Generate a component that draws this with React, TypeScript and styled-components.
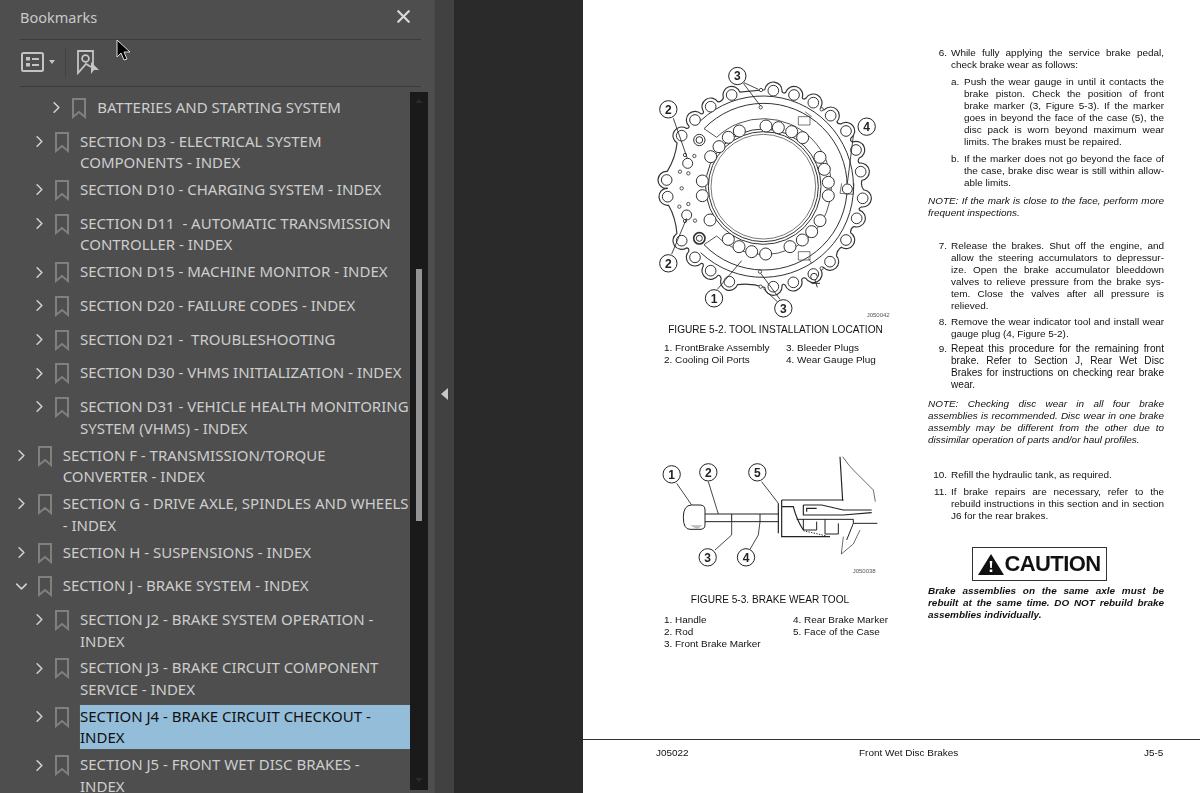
import React from 'react'
import styled, { createGlobalStyle } from 'styled-components'
import { ChevronDown, ChevronRight, X } from 'lucide-react'

type Bookmark = {
    depth: number
    text: string
    open?: boolean
    selected?: boolean
}

const bookmarks: Bookmark[] = [
    { depth: 3, text: 'BATTERIES AND STARTING SYSTEM' },
    { depth: 2, text: 'SECTION D3 - ELECTRICAL SYSTEM COMPONENTS - INDEX' },
    { depth: 2, text: 'SECTION D10 - CHARGING SYSTEM - INDEX' },
    { depth: 2, text: 'SECTION D11  - AUTOMATIC TRANSMISSION CONTROLLER - INDEX' },
    { depth: 2, text: 'SECTION D15 - MACHINE MONITOR - INDEX' },
    { depth: 2, text: 'SECTION D20 - FAILURE CODES - INDEX' },
    { depth: 2, text: 'SECTION D21 -  TROUBLESHOOTING' },
    { depth: 2, text: 'SECTION D30 - VHMS INITIALIZATION - INDEX' },
    { depth: 2, text: 'SECTION D31 - VEHICLE HEALTH MONITORING SYSTEM (VHMS) - INDEX' },
    { depth: 1, text: 'SECTION F - TRANSMISSION/TORQUE CONVERTER - INDEX' },
    { depth: 1, text: 'SECTION G - DRIVE AXLE, SPINDLES AND WHEELS - INDEX' },
    { depth: 1, text: 'SECTION H - SUSPENSIONS - INDEX' },
    { depth: 1, text: 'SECTION J - BRAKE SYSTEM - INDEX', open: true },
    { depth: 2, text: 'SECTION J2 - BRAKE SYSTEM OPERATION - INDEX' },
    { depth: 2, text: 'SECTION J3 - BRAKE CIRCUIT COMPONENT SERVICE - INDEX' },
    { depth: 2, text: 'SECTION J4 - BRAKE CIRCUIT CHECKOUT - INDEX', selected: true },
    { depth: 2, text: 'SECTION J5 - FRONT WET DISC BRAKES -\nINDEX' },
]

const outerBolts = [
    [400, 122], [462, 135], [520, 158], [572, 197], [618, 243], [648, 300], [662, 365], [668, 445],
    [650, 505], [618, 570], [570, 635], [520, 672], [460, 697], [400, 710], [268, 695], [212, 662],
    [165, 622], [125, 572], [83, 440], [80, 390], [125, 257], [165, 210], [212, 170], [275, 135],
]

const innerBolts = [
    [378, 228], [415, 233], [455, 245], [488, 263], [540, 322], [553, 358], [565, 397], [565, 437],
    [540, 512], [515, 545], [487, 570], [450, 590], [377, 612], [335, 605], [297, 590], [265, 568],
    [298, 243], [265, 262], [237, 290], [212, 320], [187, 393], [187, 437], [210, 510],
]

const smallHoles = [
    [363, 120], [362, 172], [360, 665], [362, 710], [545, 178], [545, 655], [125, 415], [120, 365],
    [145, 370], [163, 318], [135, 315], [118, 470], [145, 462], [165, 512], [135, 513],
]

// scalloped edge of the disc: an arc round each bolt, a shallow curve to the next one
const scallopPath = () => {
    const cx = 370
    const cy = 410
    const lobe = 26
    const parts: string[] = []
    outerBolts.forEach(([x, y], i) => {
        const a = Math.atan2(y - cy, x - cx)
        const tx = -Math.sin(a)
        const ty = Math.cos(a)
        const sx = x - tx * lobe
        const sy = y - ty * lobe
        const ex = x + tx * lobe
        const ey = y + ty * lobe
        if (i === 0) {
            parts.push(`M${sx} ${sy}`)
        } else {
            const [px, py] = outerBolts[i - 1]
            const pa = Math.atan2(py - cy, px - cx)
            const mx = (px + x) / 2 - Math.cos(pa) * 4
            const my = (py + y) / 2 - Math.sin(pa) * 4
            parts.push(`Q${mx} ${my} ${sx} ${sy}`)
        }
        parts.push(`A${lobe} ${lobe} 0 0 1 ${ex} ${ey}`)
    })
    return parts.join(' ') + ' Z'
}

const Callout = ({ x, y, n }: { x: number; y: number; n: number }) => (
    <g>
        <circle cx={x} cy={y} r={26} fill="#fff" stroke="#222" strokeWidth={3} />
        <text x={x} y={y + 13} textAnchor="middle" fontSize={36} fontWeight={700} fontFamily="Liberation Sans, sans-serif" fill="#222">{n}</text>
    </g>
)

const DiscFigure = () => (
    <FigureSvg viewBox="0 0 780 810" $height={270}>
        <g fill="#fff" stroke="#333" strokeWidth={3}>
            <path d={scallopPath()} strokeWidth={3.5} />
            <path fill="none" d="M182 212 A272 272 0 1 1 182 608" />
            <path fill="none" d="M192 236 A250 250 0 1 1 192 584" />
            <path fill="none" d="M192 236 L230 262 A204 204 0 1 1 230 558 L192 584" strokeWidth={2.5} />
            {outerBolts.map(([x, y]) => <circle key={`${x}-${y}`} cx={x} cy={y} r={16} />)}
            <circle cx={370} cy={410} r={173} fill="none" />
            <circle cx={370} cy={410} r={165} fill="none" />
            <circle cx={370} cy={410} r={157} fill="none" strokeWidth={2} />
            {innerBolts.map(([x, y]) => <circle key={`${x}-${y}`} cx={x} cy={y} r={18} />)}
            <circle cx={178} cy={270} r={17} />
            <circle cx={178} cy={270} r={10} />
            <circle cx={178} cy={565} r={17} strokeWidth={5} />
            <circle cx={178} cy={565} r={9} />
            <circle cx={143} cy={340} r={15} />
            <circle cx={140} cy={495} r={15} />
            {smallHoles.map(([x, y]) => <circle key={`${x}-${y}`} cx={x} cy={y} r={5} strokeWidth={2.5} />)}
            <circle cx={622} cy={417} r={15} />
            <path fill="none" d="M605 400 L600 430 L640 433 L642 400 M475 200 H510 V225 H475 Z M495 185 L515 200 M475 605 H510 V630 H475 Z M505 625 L515 640" strokeWidth={2} />
            <circle cx={522} cy={680} r={10} />
            <path d="M525 690 L532 712 M515 700 L540 700" fill="none" />
        </g>
        <g fill="none" stroke="#222" strokeWidth={2.5}>
            <path d="M310 100 L362 168 M312 98 L355 118 M100 205 L142 325 M640 258 L622 400 M95 612 L140 505 M232 718 L305 632 M420 748 L362 670 M412 755 L370 716" />
        </g>
        <Callout x={292} y={78} n={3} />
        <Callout x={85} y={178} n={2} />
        <Callout x={680} y={230} n={4} />
        <Callout x={85} y={640} n={2} />
        <Callout x={222} y={745} n={1} />
        <Callout x={430} y={775} n={3} />
        <text x={680} y={802} fontSize={18} fontFamily="Liberation Sans, sans-serif" fill="#555">J050042</text>
    </FigureSvg>
)

const ToolFigure = () => (
    <FigureSvg viewBox="0 0 780 420" $height={140} $top={74}>
        <g fill="none" stroke="#222" strokeWidth={3}>
            <path d="M155 195 H180 Q195 195 195 210 V255 Q195 268 180 268 H150 Q130 268 130 232 Q130 195 155 195 Z" fill="#fff" />
            <path d="M150 256 L187 256 L172 268 Z" fill="#bbb" stroke="none" />
            <path d="M195 222 H415 M195 245 H415 M275 222 V245 M360 222 V245" />
            <path d="M415 190 V280 M425 180 H610 M425 180 V290 H570 M425 200 H460 Q470 240 490 270" strokeWidth={3.5} />
            <path d="M600 50 L608 182 M490 195 H545 L610 210 H695 M490 195 V225 H610 L695 218 M500 215 V205 H530" strokeWidth={3.5} />
            <path d="M470 238 H640 V250 H712 M490 238 V270 H530 V245 M555 238 V282 H595 V250 M640 250 L620 300" />
            <path d="M490 272 L560 288" strokeDasharray="4 4" />
            <path d="M608 50 Q625 75 640 90 T700 150 L706 185 M610 290 L604 342 L640 312 L660 270" strokeWidth={2} />
            <path d="M110 130 L155 195 M205 125 L235 222 M365 125 L415 190 M275 245 V285 L225 330 M360 245 L355 285 L330 328" strokeWidth={2.5} />
        </g>
        <Callout x={95} y={103} n={1} />
        <Callout x={205} y={97} n={2} />
        <Callout x={352} y={97} n={5} />
        <Callout x={203} y={352} n={3} />
        <Callout x={318} y={352} n={4} />
        <text x={638} y={400} fontSize={18} fontFamily="Liberation Sans, sans-serif" fill="#555">J050038</text>
    </FigureSvg>
)

const App: React.FC = () => {
    return (
        <Screen>
            <GlobalStyle />
            <Sidebar>
                <PanelHeader>
                    <PanelTitle>Bookmarks</PanelTitle>
                    <CloseIcon size={21} strokeWidth={2.6} />
                </PanelHeader>
                <Toolbar>
                    <svg width="23" height="20" viewBox="0 0 23 20" fill="none" stroke="#c4c4c4" strokeWidth="2">
                        <rect x="1" y="1" width="21" height="18" rx="1.5" />
                        <rect x="5" y="5" width="4" height="3.5" fill="#c4c4c4" stroke="none" />
                        <rect x="5" y="11" width="4" height="3.5" fill="#c4c4c4" stroke="none" />
                        <path d="M11 7 H18 M11 13 H18" />
                    </svg>
                    <Caret />
                    <ToolSeparator />
                    <svg width="23" height="25" viewBox="0 0 23 25" fill="none" stroke="#c4c4c4" strokeWidth="1.8">
                        <path d="M1 1 H16 V18 L9 14 L1 23 Z" />
                        <circle cx="8.5" cy="8.5" r="3.4" />
                        <path d="M14 12 L22 20 H17 L14 24 Z" fill="#c4c4c4" stroke="none" />
                    </svg>
                </Toolbar>
                <ListArea>
                    <List>
                        {bookmarks.map((b) => (
                            <Row key={b.text} $depth={b.depth}>
                                <Twisty>
                                    {b.open ? <ChevronDown size={19} strokeWidth={2} /> : <ChevronRight size={19} strokeWidth={2} />}
                                </Twisty>
                                <Ribbon width="14" height="21" viewBox="0 0 14 21" fill="none" stroke="#808080" strokeWidth="2">
                                    <path d="M1 1 H13 V19 L7 14 L1 19 Z" />
                                </Ribbon>
                                <Label $selected={b.selected}>{b.text}</Label>
                            </Row>
                        ))}
                    </List>
                    <ScrollTrack>
                        <ScrollArrow $down={false} />
                        <ScrollThumb />
                        <ScrollArrow $down />
                    </ScrollTrack>
                </ListArea>
            </Sidebar>
            <Splitter>
                <SplitArrow />
            </Splitter>
            <Gutter />
            <Sheet>
                <Columns>
                    <FigureColumn>
                        <DiscFigure />
                        <Caption $top={4} $bottom={6} $shift={11}>FIGURE 5-2. TOOL INSTALLATION LOCATION</Caption>
                        <Legend $second={122}>
                            <span>1. FrontBrake Assembly</span>
                            <span>3. Bleeder Plugs</span>
                            <span>2. Cooling Oil Ports</span>
                            <span>4. Wear Gauge Plug</span>
                        </Legend>
                        <ToolFigure />
                        <Caption $top={14} $bottom={8}>FIGURE 5-3. BRAKE WEAR TOOL</Caption>
                        <Legend $second={129}>
                            <span>1. Handle</span>
                            <span>4. Rear Brake Marker</span>
                            <span>2. Rod</span>
                            <span>5. Face of the Case</span>
                            <span>3. Front Brake Marker</span>
                        </Legend>
                    </FigureColumn>
                    <TextColumn>
                        <Step n="6.">While fully applying the service brake pedal, check brake wear as follows:</Step>
                        <SubStep n="a.">Push the wear gauge in until it contacts the brake piston. Check the position of front brake marker (3, Figure 5-3). If the marker goes in beyond the face of the case (5), the disc pack is worn beyond maximum wear limits. The brakes must be repaired.</SubStep>
                        <SubStep n="b.">If the marker does not go beyond the face of the case, brake disc wear is still within allow-able limits.</SubStep>
                        <Note $top={6}>NOTE: If the mark is close to the face, perform more frequent inspections.</Note>
                        <Step n="7." top={21}>Release the brakes. Shut off the engine, and allow the steering accumulators to depressur-ize. Open the brake accumulator bleeddown valves to relieve pressure from the brake sys-tem. Close the valves after all pressure is relieved.</Step>
                        <Step n="8.">Remove the wear indicator tool and install wear gauge plug (4, Figure 5-2).</Step>
                        <Step n="9." top={3} wide>Repeat this procedure for the remaining front brake. Refer to Section J, Rear Wet Disc Brakes for instructions on checking rear brake wear.</Step>
                        <Note $top={7}>NOTE: Checking disc wear in all four brake assemblies is recommended. Disc wear in one brake assembly may be different from the other due to dissimilar operation of parts and/or haul profiles.</Note>
                        <Step n="10." top={23}>Refill the hydraulic tank, as required.</Step>
                        <Step n="11." top={5}>If brake repairs are necessary, refer to the rebuild instructions in this section and in section J6 for the rear brakes.</Step>
                        <CautionBox>
                            <svg width="26" height="21" viewBox="0 0 26 21">
                                <path d="M13 0 L26 21 H0 Z" fill="#111" />
                                <path d="M11.7 7 H14.3 L13.8 14 H12.2 Z M11.7 15.5 H14.3 V18 H11.7 Z" fill="#fff" />
                            </svg>
                            CAUTION
                        </CautionBox>
                        <Warning>Brake assemblies on the same axle must be rebuilt at the same time. DO NOT rebuild brake assemblies individually.</Warning>
                    </TextColumn>
                </Columns>
                <SheetFooter>
                    <span>J05022</span>
                    <span>Front Wet Disc Brakes</span>
                    <span>J5-5</span>
                </SheetFooter>
            </Sheet>
            <Pointer width="18" height="24" viewBox="0 0 18 24">
                <path d="M1 1 V18 L5 14 L8 21 L11 20 L8 13 H14 Z" fill="#000" stroke="#ddd" strokeWidth="1" />
            </Pointer>
        </Screen>
    )
}

const Step = ({ n, top = 4, wide, children }: { n: string; top?: number; wide?: boolean; children: React.ReactNode }) => (
    <StepRow $top={top}>
        <StepNumber>{n}</StepNumber>
        <Para $wide={wide}>{children}</Para>
    </StepRow>
)

const SubStep = ({ n, children }: { n: string; children: React.ReactNode }) => (
    <SubRow>
        <span>{n}</span>
        <Para>{children}</Para>
    </SubRow>
)

const GlobalStyle = createGlobalStyle`
    html, body {
        margin: 0;
        padding: 0;
        height: 100%;
        overflow: hidden;
    }

    #root {
        height: 100%;
    }
`

const Screen = styled.div`
    display: flex;
    position: relative;
    width: 1200px;
    height: 793px;
    overflow: hidden;
    background-color: #2a2a2a;
`

const Sidebar = styled.aside`
    width: 434px;
    flex: none;
    display: flex;
    flex-direction: column;
    box-sizing: border-box;
    border-left: 1px solid #4f4f4f;
    background-color: #4e4e4e;
    color: #cfcfcf;
    font-family: "Noto Sans", sans-serif;
`

const PanelHeader = styled.header`
    height: 40px;
    margin: 0 13px 0 19px;
    display: flex;
    align-items: center;
    justify-content: space-between;
    box-sizing: border-box;
    padding: 0 7px 6px 0;
    border-bottom: 1px solid #3b3b3b;
`

const PanelTitle = styled.h2`
    margin: 0;
    font-size: 14.5px;
    font-weight: 400;
    color: #c9c9c9;
`

const CloseIcon = styled(X)`
    color: #d8d8d8;
`

const Toolbar = styled.div`
    height: 47px;
    margin: 0 13px 0 19px;
    display: flex;
    align-items: center;
    box-sizing: border-box;
    padding: 0 0 2px 1px;
    border-bottom: 1px solid #3b3b3b;
`

const Caret = styled.span`
    width: 0;
    height: 0;
    margin-left: 5px;
    border-left: 3.5px solid transparent;
    border-right: 3.5px solid transparent;
    border-top: 4px solid #c4c4c4;
`

const ToolSeparator = styled.span`
    width: 1px;
    height: 29px;
    margin: 0 11px 0 10px;
    background-color: #424242;
`

const ListArea = styled.div`
    flex: 1;
    min-height: 0;
    display: flex;
    padding-right: 6px;
    overflow: hidden;
`

const List = styled.ul`
    flex: 1;
    min-width: 0;
    margin: 0;
    padding: 7px 0 0;
    list-style: none;
`

const Row = styled.li<{ $depth: number }>`
    display: grid;
    grid-template-columns: 21px 29.4px 1fr;
    box-sizing: border-box;
    min-height: 33.7px;
    padding: 3px 0 2.3px ${(p) => p.$depth * 17.3 - 6}px;
    align-items: start;
`

const Twisty = styled.span`
    display: flex;
    align-items: center;
    height: 21.6px;
    color: #cfcfcf;
`

const Ribbon = styled.svg`
    margin: 1px 0 0 4.4px;
`

const Label = styled.span<{ $selected?: boolean }>`
    font-size: 15px;
    line-height: 21.6px;
    color: ${(p) => (p.$selected ? '#101010' : '#cdcdcd')};
    background-color: ${(p) => (p.$selected ? '#94bdd9' : 'transparent')};
    outline: ${(p) => (p.$selected ? '1px dotted #555' : 'none')};
    margin-top: ${(p) => (p.$selected ? '-1px' : '0')};
    padding-top: ${(p) => (p.$selected ? '1px' : '0')};
    white-space: pre-wrap;
`

const ScrollTrack = styled.div`
    width: 18px;
    flex: none;
    box-sizing: border-box;
    height: 698px;
    margin-top: 5px;
    display: flex;
    flex-direction: column;
    align-items: center;
    background-color: #1a1a1a;
    padding-top: 177px;
    position: relative;
`

const ScrollThumb = styled.div`
    width: 6px;
    height: 252px;
    background-color: #949494;
`

const ScrollArrow = styled.span<{ $down: boolean }>`
    position: absolute;
    left: 5px;
    ${(p) => (p.$down ? 'bottom: 8px;' : 'top: 7px;')}
    width: 0;
    height: 0;
    border-left: 4px solid transparent;
    border-right: 4px solid transparent;
    ${(p) => (p.$down ? 'border-top: 4px solid #2a2a2a;' : 'border-bottom: 4px solid #2a2a2a;')}
`

const Splitter = styled.div`
    width: 20px;
    flex: none;
    display: flex;
    align-items: center;
    justify-content: center;
    box-sizing: border-box;
    padding-bottom: 6px;
    border-left: 1px solid #4a4a4a;
    background-color: #414141;
`

const SplitArrow = styled.span`
    width: 0;
    height: 0;
    border-top: 6px solid transparent;
    border-bottom: 6px solid transparent;
    border-right: 7px solid #c8c8c8;
`

const Gutter = styled.div`
    width: 129px;
    flex: none;
    background-color: #2a2a2a;
`

const Sheet = styled.main`
    flex: 1;
    display: flex;
    flex-direction: column;
    background-color: #fff;
    color: #111;
    font-family: "Liberation Sans", Arial, sans-serif;
    font-size: 9.95px;
    line-height: 12px;
`

const Columns = styled.div`
    flex: 1;
    display: grid;
    grid-template-columns: 260px 236px;
    column-gap: 28px;
    padding-left: 57px;
    filter: blur(0.25px);
`

const FigureColumn = styled.div`
    padding-top: 50px;
`

const FigureSvg = styled.svg<{ $height: number; $top?: number }>`
    display: block;
    width: 260px;
    height: ${(p) => p.$height}px;
    margin-top: ${(p) => p.$top ?? 0}px;
`

const Caption = styled.div<{ $top: number; $bottom: number; $shift?: number }>`
    margin: ${(p) => p.$top}px 0 ${(p) => p.$bottom}px ${(p) => p.$shift ?? 0}px;
    text-align: center;
    font-size: 10.1px;
`

const Legend = styled.div<{ $second: number }>`
    display: grid;
    grid-template-columns: ${(p) => p.$second}px 1fr;
    padding-left: 24px;
`

const TextColumn = styled.div`
    padding-top: 43px;
`

const StepRow = styled.div<{ $top: number }>`
    display: grid;
    grid-template-columns: 19px 1fr;
    column-gap: 4px;
    margin-top: ${(p) => p.$top}px;
`

const StepNumber = styled.span`
    text-align: right;
`

const SubRow = styled.div`
    display: grid;
    grid-template-columns: 9px 1fr;
    column-gap: 4px;
    margin: 5px 0 0 23px;
`

const Para = styled.p<{ $wide?: boolean }>`
    margin: 0;
    text-align: justify;
    font-size: ${(p) => (p.$wide ? '10.1px' : 'inherit')};
`

const Note = styled.p<{ $top: number }>`
    margin: ${(p) => p.$top}px 0 0;
    font-style: italic;
    text-align: justify;
`

const CautionBox = styled.div`
    width: 135px;
    height: 34px;
    margin: 25px 0 4px 44px;
    display: flex;
    align-items: center;
    justify-content: center;
    box-sizing: border-box;
    border: 1px solid #333;
    color: #111;
    font-size: 22px;
    font-weight: 700;
    letter-spacing: -0.6px;
`

const Warning = styled.p`
    margin: 0;
    font-weight: 700;
    font-style: italic;
    text-align: justify;
`

const SheetFooter = styled.footer`
    height: 54px;
    flex: none;
    box-sizing: border-box;
    display: grid;
    grid-template-columns: 203px 285px auto;
    padding: 7px 0 0 73px;
    border-top: 1px solid #333;
    filter: blur(0.25px);
`

const Pointer = styled.svg`
    position: absolute;
    left: 116px;
    top: 39px;
`

export default App
